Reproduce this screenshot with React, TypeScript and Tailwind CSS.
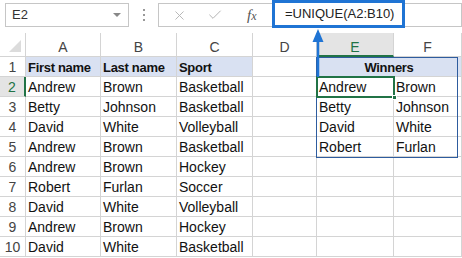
import { X, Check } from "lucide-react";

const rows: string[][] = [
    ["First name", "Last name", "Sport", "", "Winners", ""],
    ["Andrew", "Brown", "Basketball", "", "Andrew", "Brown"],
    ["Betty", "Johnson", "Basketball", "", "Betty", "Johnson"],
    ["David", "White", "Volleyball", "", "David", "White"],
    ["Andrew", "Brown", "Basketball", "", "Robert", "Furlan"],
    ["Andrew", "Brown", "Hockey", "", "", ""],
    ["Robert", "Furlan", "Soccer", "", "", ""],
    ["David", "White", "Volleyball", "", "", ""],
    ["Andrew", "Brown", "Hockey", "", "", ""],
    ["David", "White", "Basketball", "", "", ""],
];

const letters = ["A", "B", "C", "D", "E", "F"];

function Toolbar() {
    return (
        <div className="relative flex h-[33px] items-start pt-[3px]">
            <div className="ml-[5px] flex h-[24px] w-[124px] items-center justify-between border border-[#c6c6c6] pl-[6px] pr-[7px] text-[13px] text-[#333]">
                <span>E2</span>
                <span className="h-0 w-0 border-x-[4px] border-t-[4px] border-x-transparent border-t-[#888]"></span>
            </div>
            <div className="ml-[13px] flex h-[24px] w-[4px] flex-col items-center justify-center gap-[3px]">
                <span className="h-[2px] w-[2px] bg-[#999]"></span>
                <span className="h-[2px] w-[2px] bg-[#999]"></span>
                <span className="h-[2px] w-[2px] bg-[#999]"></span>
            </div>
            <div className="ml-[12px] flex h-[24px] flex-1 items-center border border-[#c6c6c6]">
                <div className="flex w-[111px] items-center">
                    <X className="ml-[13px] text-[#b4b4b4]" size={15} strokeWidth={1.5} />
                    <Check className="ml-[20px] text-[#b4b4b4]" size={16} strokeWidth={1.5} />
                    <span className="ml-[24px] font-['Liberation_Serif',serif] text-[15px] italic text-[#555]">f<span className="text-[12px]">x</span></span>
                </div>
            </div>
            {/* highlighted formula annotation */}
            <div className="absolute left-[272px] top-0 flex h-[28px] w-[133px] items-center border-[3px] border-[#1f74d4] bg-white pl-[10px] text-[13px] text-[#222]">
                =UNIQUE(A2:B10)
            </div>
        </div>
    );
}

function Arrow() {
    return (
        <svg className="absolute left-[310px] top-[27px]" width="16" height="50" viewBox="0 0 16 50">
            <path d="M8 6 L8 50" stroke="#1f74d4" strokeWidth="2.5" />
            <path d="M2.5 15 L8 2 L13.5 15 Z" fill="#1f74d4" />
        </svg>
    );
}

export default function App() {
    return (
        <div className="relative h-[258px] w-[462px] overflow-hidden bg-white font-['Liberation_Sans',Arial,sans-serif]">
            <Toolbar />
            <div className="grid grid-cols-[26px_75px_76px_76px_64px_77px_1fr] grid-rows-[24px_repeat(10,20px)] text-[14px]">
                <div className="relative border-b border-r border-[#d4d4d4]">
                    <div className="absolute bottom-[4px] right-[4px] h-0 w-0 border-b-[12px] border-l-[12px] border-b-[#dcdcdc] border-l-transparent"></div>
                </div>
                {letters.map((l) => (
                    <div
                        key={l}
                        className={
                            l == "E"
                                ? "flex items-end justify-center border-b-2 border-r border-b-[#217346] border-r-[#d4d4d4] bg-[#e4e4e4] pb-[1px] leading-none text-[#217346]"
                                : "flex items-end justify-center border-b border-r border-[#d4d4d4] pb-[2px] leading-none text-[#444]"
                        }
                    >
                        {l}
                    </div>
                ))}
                {rows.map((r, i) => (
                    <Row key={i} cells={r} idx={i + 1} />
                ))}
            </div>
            {/* winners box outline and active cell */}
            <div className="pointer-events-none absolute left-[316px] top-[57px] h-[101px] w-[142px] border border-[#2e5c9e]"></div>
            <div className="pointer-events-none absolute left-[316px] top-[76px] h-[22px] w-[79px] border-2 border-[#217346]">
                <div className="absolute -bottom-[4px] -right-[4px] h-[5px] w-[5px] border border-white bg-[#217346]"></div>
            </div>
            <Arrow />
        </div>
    );
}

function Row({ cells, idx }: { cells: string[]; idx: number }) {
    const header = idx == 1;
    return (
        <>
            <div
                className={
                    idx == 2
                        ? "flex items-center justify-center border-b border-r-2 border-b-[#d4d4d4] border-r-[#217346] bg-[#e4e4e4] pt-[2px] text-[#217346]"
                        : "flex items-center justify-center border-b border-r border-[#d4d4d4] pt-[2px] text-[#444]"
                }
            >
                {idx}
            </div>
            {cells.map((c, j) => {
                if (header && j == 5) return null;
                if (header && j == 4) {
                    return (
                        <div key={j} className="col-span-2 flex items-center justify-center border-b border-r border-[#d4d4d4] bg-[#d9e1f2] pt-[2px] text-[13px] font-bold tracking-[-0.3px] text-[#111]">
                            {c}
                        </div>
                    );
                }
                const blue = header && j != 3;
                return (
                    <div
                        key={j}
                        className={
                            "flex items-center whitespace-nowrap border-b border-r border-[#d4d4d4] pl-[2px] pt-[2px] text-[#111] " +
                            (blue ? "bg-[#d9e1f2] text-[13px] font-bold tracking-[-0.3px]" : "")
                        }
                    >
                        {c}
                    </div>
                );
            })}
        </>
    );
}
